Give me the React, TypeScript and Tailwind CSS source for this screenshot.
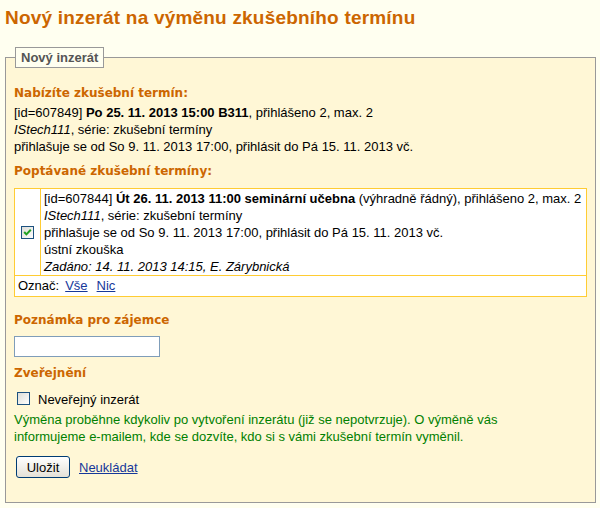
import React from 'react';

const sans = "font-['Liberation_Sans',Arial,sans-serif]";
const heading = "font-['DejaVu_Sans',Verdana,sans-serif] font-bold text-[12px] leading-[16px] text-[#CC6600]";

function XpCheckbox({ checked }: { checked?: boolean }) {
  return (
    <svg width="13" height="13" viewBox="0 0 13 13" className="block shrink-0">
      <defs>
        <linearGradient id={checked ? 'cbg1' : 'cbg2'} x1="0" y1="0" x2="1" y2="1">
          <stop offset="0" stopColor="#DCDCD7" />
          <stop offset="1" stopColor="#FFFFFF" />
        </linearGradient>
      </defs>
      <rect x="0.5" y="0.5" width="12" height="12" fill={`url(#${checked ? 'cbg1' : 'cbg2'})`} stroke="#1C5180" />
      {checked && (
        <polyline points="3.2,6 5.4,8.4 9.8,3.8" fill="none" stroke="#21A121" strokeWidth="2" />
      )}
    </svg>
  );
}

export default function App() {
  return (
    <div className={`${sans} min-h-screen bg-[#FFFFF0] text-[13px] leading-[17px] text-black`}>
      <div className="px-[5px] pt-[7px]">
        <h1 className="text-[19px] leading-[22px] font-bold tracking-[0.2px] text-[#CC6600]">
          Nový inzerát na výměnu zkušebního termínu
        </h1>
      </div>

      <fieldset className="mt-[18px] ml-[5px] mr-[4px] border border-[#999999] bg-[#FFF7D6] px-[8px] pb-[24px]">
        <legend className="ml-[1px] h-[21px] border border-[#999999] bg-[#FFFFF0] px-[5px] text-[13px] leading-[19px] font-bold text-[#555555]">
          Nový inzerát
        </legend>

        <h2 className={`${heading} mt-[17px]`}>Nabízíte zkušební termín:</h2>
        <div className="mt-[3px] whitespace-nowrap">
          <div>
            [id=607849] <b>Po 25. 11. 2013 15:00 B311</b>, přihlášeno 2, max. 2
          </div>
          <div>
            <i>IStech111</i>, série: zkušební termíny
          </div>
          <div>přihlašuje se od So 9. 11. 2013 17:00, přihlásit do Pá 15. 11. 2013 vč.</div>
        </div>

        <h2 className={`${heading} mt-[8px]`}>Poptávané zkušební termíny:</h2>
        <div className="mt-[9px] border border-[#FFCC33] bg-white">
          <div className="flex border-b border-[#FFCC33]">
            <div className="flex w-[26px] items-center justify-center border-r border-[#FFCC33]">
              <XpCheckbox checked />
            </div>
            <div className="pt-[1px] pl-[3px] whitespace-nowrap">
              <div>
                [id=607844] <b>Út 26. 11. 2013 11:00 seminární učebna</b> (výhradně řádný), přihlášeno 2, max. 2
              </div>
              <div>
                <i>IStech111</i>, série: zkušební termíny
              </div>
              <div>přihlašuje se od So 9. 11. 2013 17:00, přihlásit do Pá 15. 11. 2013 vč.</div>
              <div>ústní zkouška</div>
              <div>
                <i>Zadáno: 14. 11. 2013 14:15, E. Zárybnická</i>
              </div>
            </div>
          </div>
          <div className="flex gap-[6px] px-[3px] pt-[1px] pb-[2px]">
            <span>Označ:</span>
            <a href="#" className="text-[#16389A] underline">Vše</a>
            <a href="#" className="ml-[3px] text-[#16389A] underline">Nic</a>
          </div>
        </div>

        <h2 className={`${heading} mt-[15px]`}>Poznámka pro zájemce</h2>
        <input
          type="text"
          className="mt-[8px] block h-[21px] w-[146px] border border-[#7F9DB9] bg-white px-[2px] outline-none"
        />

        <h2 className={`${heading} mt-[8px]`}>Zveřejnění</h2>
        <label className="mt-[10px] flex items-start gap-[8px] pl-[3px]">
          <span className="mt-[1px]">
            <XpCheckbox />
          </span>
          <span>Neveřejný inzerát</span>
        </label>
        <p className="mt-[3px] leading-[17px] text-[#008000]">
          Výměna proběhne kdykoliv po vytvoření inzerátu (již se nepotvrzuje). O výměně vás
          <br />
          informujeme e-mailem, kde se dozvíte, kdo si s vámi zkušební termín vyměnil.
        </p>

        <div className="mt-[11px] flex items-center gap-[9px] pl-[2px]">
          <button className="h-[22px] w-[54px] rounded-[3px] border border-[#003C74] bg-linear-to-b from-[#FFFFFF] to-[#E4E1D7] text-[13px] text-black">
            Uložit
          </button>
          <a href="#" className="text-[#16389A] underline">Neukládat</a>
        </div>
      </fieldset>
    </div>
  );
}
